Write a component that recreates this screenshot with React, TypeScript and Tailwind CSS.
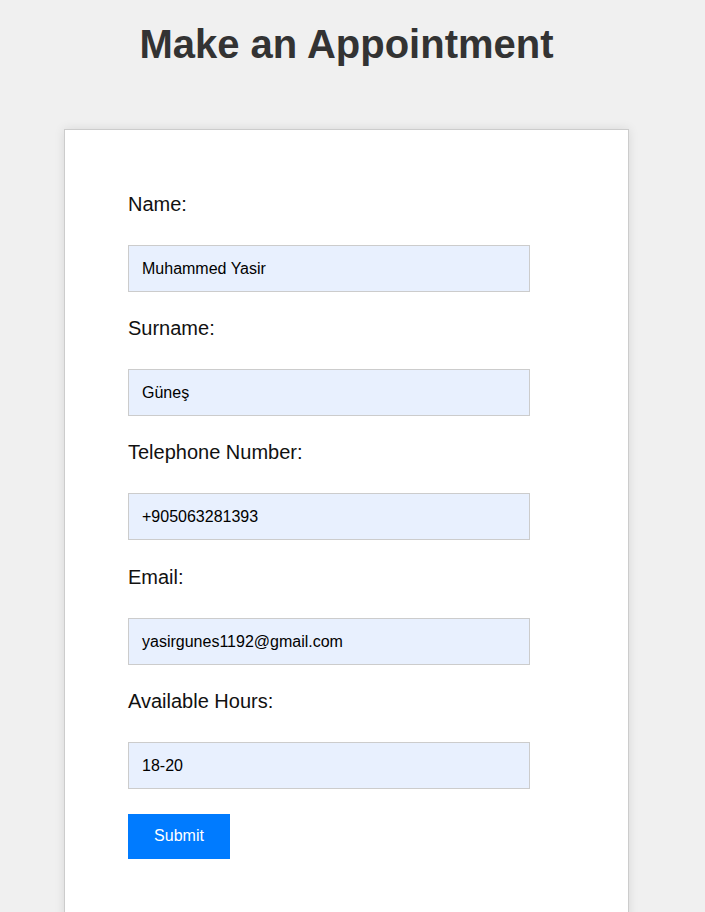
import React from 'react';

const fields = [
  { label: 'Name:', value: 'Muhammed Yasir' },
  { label: 'Surname:', value: 'Güneş' },
  { label: 'Telephone Number:', value: '+905063281393' },
  { label: 'Email:', value: 'yasirgunes1192@gmail.com' },
  { label: 'Available Hours:', value: '18-20' },
];

const App = () => {
  return (
    <div className="min-h-screen bg-[#f0f0f0] font-['Liberation_Sans',Arial,sans-serif] pb-10 pr-[12px]">
      {/* Title */}
      <h1 className="pt-[21px] text-center text-[40px] leading-[46px] font-bold text-[#333]">Make an Appointment</h1>

      {/* Form card */}
      <div className="mx-auto mt-[62px] w-[565px] bg-white border border-[#ccc] shadow-[0_0_10px_rgba(0,0,0,0.1)] px-[63px] pt-[62px] pb-[60px]">
        <form className="flex flex-col">
          {fields.map((f, i) => (
            <div key={f.label} className="flex flex-col">
              <label className="pt-px text-[20px] leading-[23px] text-[#111]">{f.label}</label>
              <div
                className={
                  'mt-[29px] w-[402px] h-[47px] flex items-center bg-[#e8f0fe] border border-[#ccc] px-[13px] text-[16px] text-black ' +
                  (i === 2 ? 'mb-[25px]' : 'mb-[24px]')
                }
              >
                {f.value}
              </div>
            </div>
          ))}
          <button
            type="button"
            className="mt-[1px] w-[102px] h-[45px] pb-[2px] bg-[#007bff] text-white text-[16px]"
          >
            Submit
          </button>
        </form>
      </div>
    </div>
  );
};

export default App;
